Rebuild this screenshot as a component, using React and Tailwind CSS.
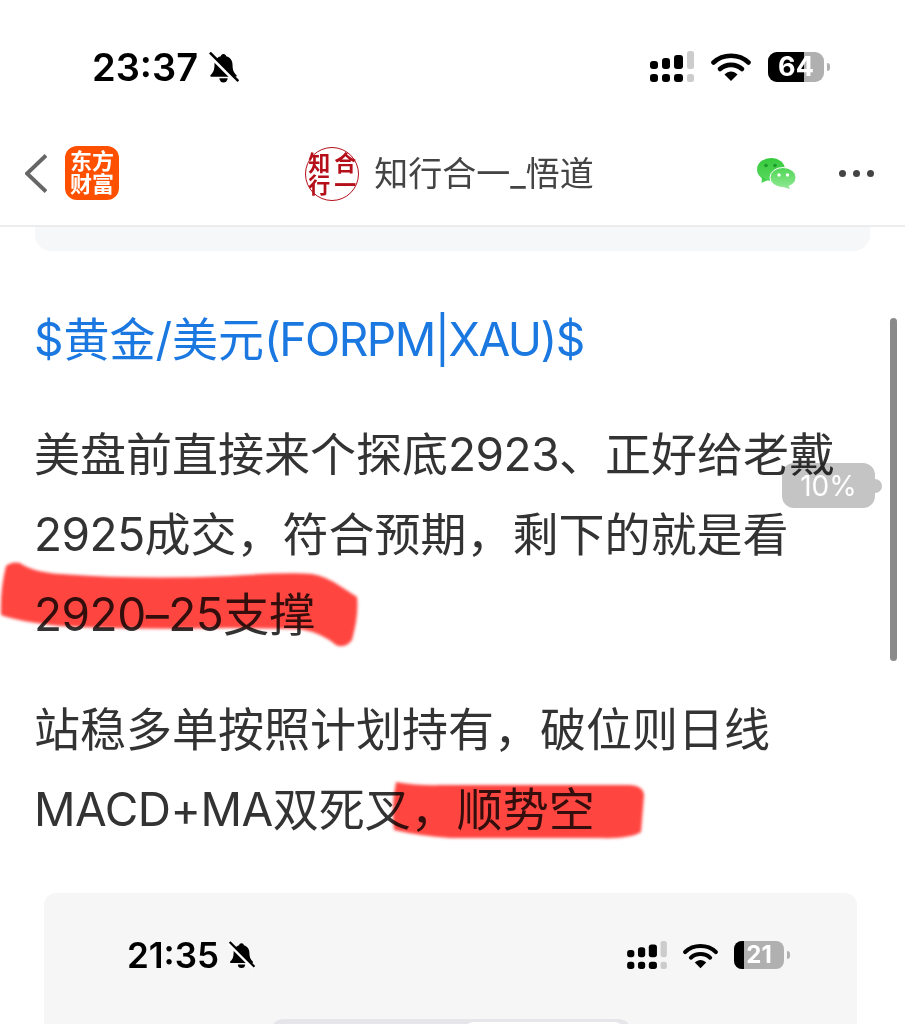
import React from 'react';

const cjk = "font-['Inter','Noto_Sans_CJK_SC',sans-serif]";

const BellOff = ({ className }) => (
  <svg viewBox="0 0 24 24" className={className}>
    <path d="M12 1.500c-1.200 0-2 .8-2.100 1.800C6.500 4.200 5 7 5 10c0 4-1.200 6.200-3 7.800-.5.6 0 1.400.7 1.400h18.600c.7 0 1.200-.8.7-1.400C20.200 16.200 19 14 19 10c0-3-1.500-5.800-4.900-6.700C14 2.300 13.200 1.500 12 1.500z" fill="#000" />
    <path d="M8.800 20.400a3.200 3.200 0 0 0 6.400 0z" fill="#000" />
    <path d="M.5 2 22 23.500" stroke="#fff" strokeWidth="2.600" />
    <path d="M1.500 .5 23.500 22.500" stroke="#000" strokeWidth="2" />
  </svg>
);

const Signal = ({ className }) => (
  <svg viewBox="0 0 44 31" className={className}>
    <rect x="0" y="10" width="8" height="8" rx="3" fill="#000" />
    <rect x="12" y="7" width="8" height="11" rx="3" fill="#000" />
    <rect x="24" y="4" width="9" height="14" rx="3" fill="#000" />
    <rect x="37" y="0" width="7" height="18" rx="2.500" fill="#ccc" />
    <rect x="0" y="23" width="8" height="8" rx="3" fill="#000" />
    <rect x="12" y="23" width="8" height="8" rx="3" fill="#000" />
    <rect x="24" y="23" width="9" height="8" rx="3" fill="#000" />
    <rect x="37" y="23" width="7" height="8" rx="2.500" fill="#ccc" />
  </svg>
);

const Wifi = ({ className }) => (
  <svg viewBox="0 0 40 29" className={className}>
    <path d="M2.500 10.500C12 1.500 28 1.500 37.500 10.500" fill="none" stroke="#000" strokeWidth="4.600" strokeLinecap="round" />
    <path d="M9 17C15 11.500 25 11.500 31 17" fill="none" stroke="#000" strokeWidth="4.600" strokeLinecap="round" />
    <path d="M13.500 22.500C17.500 18.500 22.500 18.500 26.500 22.500L20 29z" fill="#000" />
  </svg>
);

const Battery = ({ level, text, className, textClass }) => (
  <div className="flex items-center gap-[3px]">
    <div className={`relative overflow-hidden flex items-center justify-center bg-[#b0b0b0] ${className}`}>
      <div className="absolute left-0 top-0 bottom-0 bg-black" style={{ width: level }} />
      <span className={`relative text-white font-['Inter',sans-serif] font-bold ${textClass}`}>{text}</span>
    </div>
    <div className="w-[3px] h-[8px] rounded-r-full bg-[#b0b0b0]" />
  </div>
);

const WeChat = () => (
  <svg viewBox="0 0 39 31" className="w-[39px] h-[31px]">
    <defs>
      <linearGradient id="wa" x1="0" y1="0" x2="0" y2="1">
        <stop offset="0" stopColor="#35c93c" />
        <stop offset="1" stopColor="#5ad95f" />
      </linearGradient>
      <linearGradient id="wb" x1="0" y1="0" x2="0" y2="1">
        <stop offset="0" stopColor="#4fd555" />
        <stop offset="1" stopColor="#8ce88f" />
      </linearGradient>
    </defs>
    <ellipse cx="14" cy="11.500" rx="14" ry="11.500" fill="url(#wa)" />
    <path d="M5 19 4.500 25 11 22z" fill="url(#wa)" />
    <ellipse cx="26" cy="19.500" rx="13" ry="10" fill="url(#wb)" stroke="#fff" strokeWidth="1" />
    <path d="M31 27 33 31 26 29z" fill="#8ce88f" />
    <circle cx="9" cy="7.500" r="1.800" fill="#1d9a2c" />
    <circle cx="18" cy="7.500" r="1.800" fill="#1d9a2c" />
    <circle cx="22" cy="17" r="1.700" fill="#fff" />
    <circle cx="30.500" cy="17" r="1.700" fill="#fff" />
  </svg>
);

// latin runs are a touch tighter than Inter's defaults
const Num = ({ children }) => <span className="tracking-[-0.5px]">{children}</span>;

const Article = () => (
  <div className={`pl-[34px] pr-9 pt-[48px] text-[46px] leading-[80px] text-[#333] whitespace-nowrap ${cjk}`}>
    <p className="text-[#1a78e0]">$黄金/美元<span className="tracking-[-1.5px]">(FORPM|XAU)</span>$</p>
    <div className="mt-[35px]">
      <p>美盘前直接来个探底<Num>2923</Num>、正好给老戴</p>
      <p><Num>2925</Num>成交，符合预期，剩下的就是看</p>
      <p><Num>2920–25</Num>支撑</p>
    </div>
    <div className="mt-[35px]">
      <p>站稳多单按照计划持有，破位则日线</p>
      <p><Num>MACD+MA</Num>双死叉，顺势空</p>
    </div>
  </div>
);

export default function App() {
  return (
    <div className="relative w-full h-[1024px] overflow-hidden bg-white">
      {/* Status bar */}
      <div className="h-[146px] pl-[92px] pr-[75px] pt-[47px] flex items-start justify-between">
        <div className="flex items-center gap-[10px]">
          <span className="text-[38px] leading-[40px] font-semibold text-black font-['Inter',sans-serif]">23:37</span>
          <BellOff className="w-[31px] h-[31px]" />
        </div>
        <div className="flex items-center gap-[17px] pt-[4px]">
          <Signal className="w-[44px] h-[31px]" />
          <Wifi className="w-[40px] h-[29px]" />
          <Battery level={36} text="64" className="w-[56px] h-[30px] rounded-[9px]" textClass="text-[27px] leading-none" />
        </div>
      </div>

      {/* Nav */}
      <div className="h-[81px] pl-[25px] pr-[31px] flex items-start border-b-2 border-[#ececec]">
        <div className="flex-1 flex items-center gap-[18px]">
          <svg viewBox="0 0 22 39" className="w-[22px] h-[39px]">
            <path d="M21 1.500 2 19.500 21 37.500" fill="none" stroke="#666" strokeWidth="4" />
          </svg>
          <div className={`w-[54px] h-[54px] rounded-[12px] bg-[#ff5000] text-white font-bold text-[22px] leading-[23px] flex flex-col items-center justify-center ${cjk}`}>
            <span>东方</span>
            <span>财富</span>
          </div>
        </div>
        <div className="flex items-center gap-[15px] pt-[1px]">
          <div className={`w-[54px] h-[54px] rounded-full border-[1.5px] border-[#b5101a] grid grid-cols-2 place-content-center justify-items-center text-[#b5101a] font-bold text-[22px] leading-[22px] ${cjk}`}>
            <span>知</span>
            <span>合</span>
            <span>行</span>
            <span>一</span>
          </div>
          <span className={`text-[34px] leading-[40px] text-[#444] whitespace-nowrap ${cjk}`}>知行合一_悟道</span>
        </div>
        <div className="flex-1 flex items-center justify-end gap-[43px] h-[54px]">
          <WeChat />
          <div className="flex gap-[7px]">
            <div className="w-[7px] h-[7px] rounded-full bg-[#444]" />
            <div className="w-[7px] h-[7px] rounded-full bg-[#444]" />
            <div className="w-[7px] h-[7px] rounded-full bg-[#444]" />
          </div>
        </div>
      </div>

      {/* Previous card's bottom edge */}
      <div className="mx-[35px] h-[24px] bg-[#f6f7f9] rounded-b-[16px]" />

      <Article />

      {/* Embedded screenshot */}
      <div className="ml-[44px] mr-[48px] mt-[44px] h-[200px] rounded-t-[12px] bg-[#f6f6f6] pt-[47px]">
        <div className="pl-[83px] pr-[67px] flex items-center justify-between">
          <div className="flex items-center gap-[9px]">
            <span className="text-[35px] leading-[28px] font-semibold text-black font-['Inter',sans-serif]">21:35</span>
            <BellOff className="w-[27px] h-[30px]" />
          </div>
          <div className="flex items-center gap-[16px]">
            <Signal className="w-[40px] h-[28px]" />
            <Wifi className="w-[35px] h-[27px]" />
            <Battery level={10} text="21" className="w-[50px] h-[28px] rounded-[8px]" textClass="text-[24px] leading-none" />
          </div>
        </div>
        <div className="ml-[226px] mt-[49px] w-[362px] h-[40px] rounded-[14px] bg-[#e5e5ea] pl-[192px] pr-[6px] pt-[3px]">
          <div className="h-full rounded-[12px] bg-white" />
        </div>
      </div>

      {/* Red marker strokes over the text */}
      <svg viewBox="0 0 905 1024" className="absolute inset-0 w-[905px] h-[1024px] mix-blend-multiply pointer-events-none">
        <defs>
          <filter id="soft"><feGaussianBlur stdDeviation="1.500" /></filter>
        </defs>
        <g fill="#ff4440" filter="url(#soft)">
          <path d="M6 566Q12 561 20 563Q32 572 60 574Q140 580 230 576Q290 572 312 574Q325 576 340 586L357 597Q359 615 352 640Q345 649 336 645Q322 633 300 629L230 628Q130 630 60 626Q20 622 1 615Q0 590 6 566z" />
          <path d="M396 782Q420 786 440 785L630 785Q644 786 644 796L641 832Q630 839 600 838L450 838Q420 836 394 830Q391 805 396 782z" />
        </g>
      </svg>

      {/* Scrollbar */}
      <div className="absolute left-[890px] top-[318px] w-[7px] h-[343px] rounded-full bg-[#8a8a8a]" />

      {/* Scroll percent bubble */}
      <div className="absolute left-[782px] top-[463px] flex items-center">
        <div className="relative w-[93px] h-[45px] flex items-center justify-center">
          <div className="absolute inset-0 rounded-[12px] bg-[#c4c4c4] mix-blend-multiply" />
          <span className="relative text-[28px] leading-none text-white font-['Inter',sans-serif]">10%</span>
        </div>
        <div className="w-[7px] h-[14px] rounded-r-full bg-[#c4c4c4]" />
      </div>
    </div>
  );
}
